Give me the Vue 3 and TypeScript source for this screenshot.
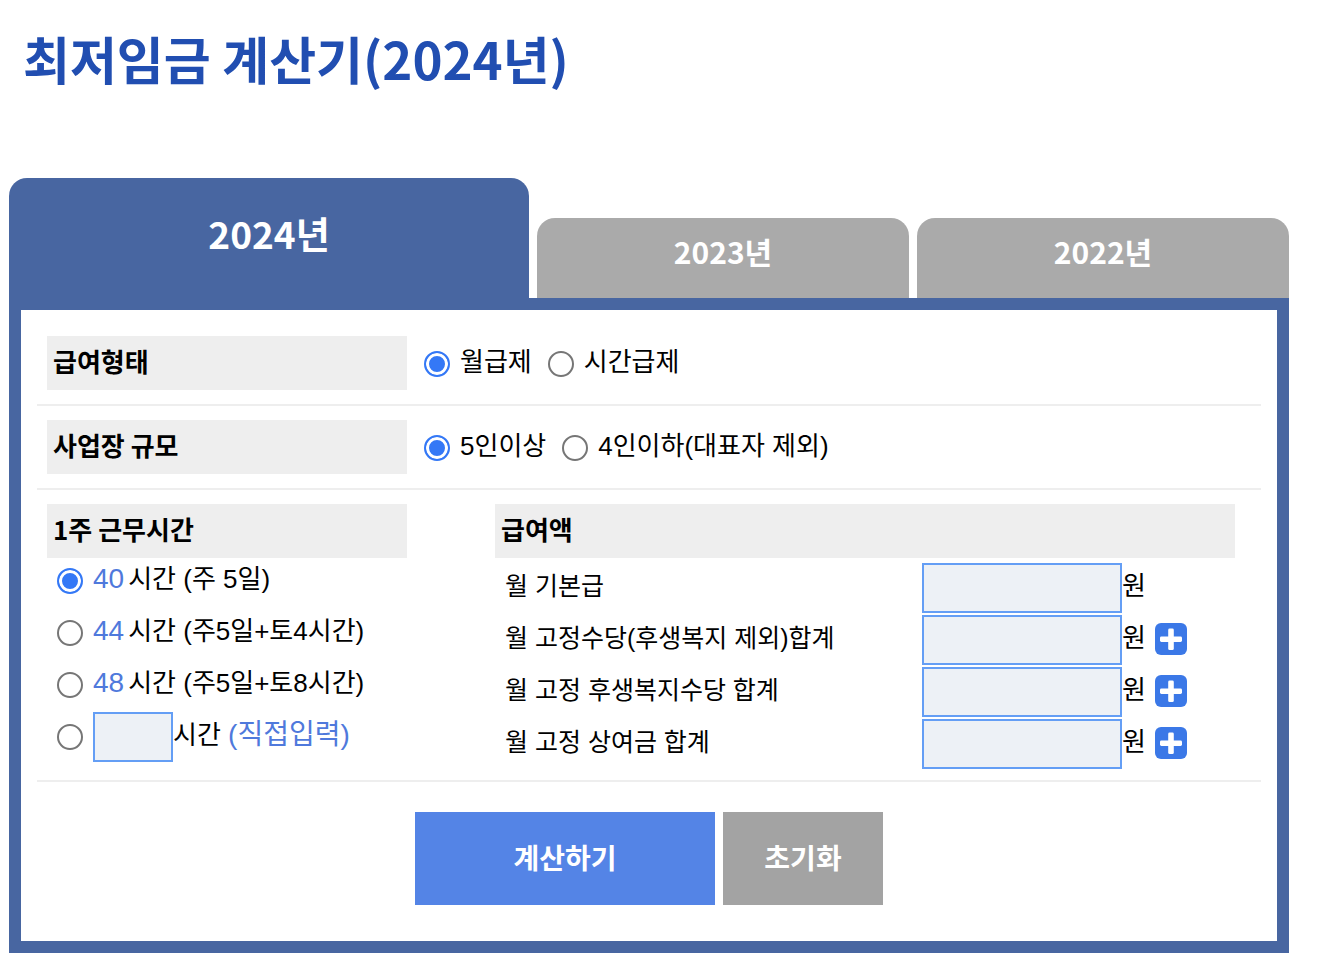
<script setup lang="ts">
import { ref } from 'vue'

interface Choice {
  value: string
  text: string
}
interface PayField {
  id: string
  label: string
  addable: boolean
}

const years: number[] = [2024, 2023, 2022]
const payTypes: Choice[] = [
  { value: 'month', text: '월급제' },
  { value: 'hour', text: '시간급제' },
]
const sizes: Choice[] = [
  { value: 'five', text: '5인이상' },
  { value: 'four', text: '4인이하(대표자 제외)' },
]
const hours: Choice[] = [
  { value: '40', text: '시간 (주 5일)' },
  { value: '44', text: '시간 (주5일+토4시간)' },
  { value: '48', text: '시간 (주5일+토8시간)' },
]
const fields: PayField[] = [
  { id: 'base', label: '월 기본급', addable: false },
  { id: 'allowance', label: '월 고정수당(후생복지 제외)합계', addable: true },
  { id: 'welfare', label: '월 고정 후생복지수당 합계', addable: true },
  { id: 'bonus', label: '월 고정 상여금 합계', addable: true },
]

const year = ref(2024)
const payType = ref('month')
const size = ref('five')
const hour = ref('40')
const customHours = ref('')
const amounts = ref<Record<string, string>>({ base: '', allowance: '', welfare: '', bonus: '' })

function reset(): void {
  payType.value = 'month'
  size.value = 'five'
  hour.value = '40'
  customHours.value = ''
  amounts.value = { base: '', allowance: '', welfare: '', bonus: '' }
}
</script>

<template>
  <main class="page">
    <h1 class="title">최저임금 계산기(2024년)</h1>
    <nav class="tabs">
      <button
        v-for="y in years"
        :key="y"
        type="button"
        class="tab"
        :class="{ active: y === year }"
        @click="year = y"
      >{{ y }}년</button>
    </nav>

    <form class="panel" @submit.prevent>
      <div class="row" role="radiogroup" aria-labelledby="pay-type">
        <div id="pay-type" class="heading side">급여형태</div>
        <div class="choices">
          <label v-for="c in payTypes" :key="c.value" class="choice">
            <input v-model="payType" class="radio" type="radio" name="pay-type" :value="c.value" />
            <span class="choice-text">{{ c.text }}</span>
          </label>
        </div>
      </div>

      <div class="row" role="radiogroup" aria-labelledby="work-size">
        <div id="work-size" class="heading side">사업장 규모</div>
        <div class="choices">
          <label v-for="c in sizes" :key="c.value" class="choice">
            <input v-model="size" class="radio" type="radio" name="work-size" :value="c.value" />
            <span class="choice-text">{{ c.text }}</span>
          </label>
        </div>
      </div>

      <div class="row split">
        <section class="side" role="radiogroup" aria-labelledby="work-hours">
          <div id="work-hours" class="heading">1주 근무시간</div>
          <div class="hours">
            <label v-for="h in hours" :key="h.value" class="hour">
              <input v-model="hour" class="radio" type="radio" name="hours" :value="h.value" />
              <span class="choice-text"><span class="accent number">{{ h.value }}</span>{{ h.text }}</span>
            </label>
            <div class="hour">
              <input id="hours-custom" v-model="hour" class="radio" type="radio" name="hours" value="custom" aria-label="직접입력" />
              <input v-model="customHours" class="box small" type="text" aria-label="1주 근무시간 직접입력" />
              <label class="choice-text" for="hours-custom">시간 <span class="accent">(직접입력)</span></label>
            </div>
          </div>
        </section>

        <section class="pay">
          <div class="heading">급여액</div>
          <div class="fields">
            <div v-for="f in fields" :key="f.id" class="field">
              <label class="field-label" :for="f.id">{{ f.label }}</label>
              <input :id="f.id" v-model="amounts[f.id]" class="box" type="text" />
              <span class="unit">원</span>
              <button v-if="f.addable" class="add" type="button" :aria-label="f.label + ' 추가'">
                <svg viewBox="0 0 32 32" width="32" height="32" aria-hidden="true">
                  <rect width="32" height="32" rx="6" fill="#3b78e7" />
                  <rect x="5" y="13.5" width="22" height="5.4" rx="1.4" fill="#fff" />
                  <rect x="13.2" y="5.5" width="5.6" height="21.6" rx="1.4" fill="#fff" />
                </svg>
              </button>
            </div>
          </div>
        </section>
      </div>

      <div class="actions">
        <button class="action calc" type="submit">계산하기</button>
        <button class="action clear" type="button" @click="reset">초기화</button>
      </div>
    </form>
  </main>
</template>

<style>
body {
  margin: 0;
  background: #fff;
}
</style>

<style scoped>
* {
  box-sizing: border-box;
}
.page {
  padding: 22px 51px 14px 9px;
  color: #000;
  font-family: "Liberation Sans", "Noto Sans CJK KR", sans-serif;
  font-size: 26px;
}
.title {
  margin: 0 0 84px;
  padding-left: 14px;
  color: #214eb1;
  font-family: "Noto Sans CJK KR", sans-serif;
  font-size: 51px;
  font-weight: 700;
  line-height: 72px;
}
.tabs {
  display: flex;
  align-items: flex-end;
  gap: 8px;
}
.tab {
  flex: 1;
  height: 80px;
  margin: 0;
  padding: 0 0 14px;
  border: 0;
  border-radius: 18px 18px 0 0;
  background: #aaa;
  color: #fff;
  font-family: "Noto Sans CJK KR", sans-serif;
  font-size: 30px;
  font-weight: 700;
  line-height: 40px;
}
.tab.active {
  flex: 0 0 520px;
  height: 120px;
  padding-bottom: 10px;
  background: #4866a1;
  font-size: 37px;
}
.panel {
  padding: 12px 16px 36px;
  border: 12px solid #4866a1;
}
.row {
  display: flex;
  padding: 14px 26px 14px 10px;
  border-bottom: 2px solid #eee;
}
.side {
  flex: 0 0 360px;
}
.heading {
  height: 54px;
  padding: 0 6px;
  background: #eee;
  font-family: "Noto Sans CJK KR", sans-serif;
  font-weight: 700;
  line-height: 50px;
}
.choices {
  display: flex;
  align-items: center;
  gap: 16px;
  padding: 2px 0 0 17px;
}
.choice,
.hour {
  display: flex;
  align-items: center;
}
.choice-text,
.unit,
.field-label {
  padding-bottom: 4px;
  line-height: 40px;
  white-space: nowrap;
}
.radio {
  appearance: none;
  flex: none;
  width: 26px;
  height: 26px;
  margin: 0 10px 0 0;
  border: 2px solid #767676;
  border-radius: 50%;
  background: #fff;
}
.radio:checked {
  border-color: #3478f6;
  background: #3478f6;
  box-shadow: inset 0 0 0 3px #fff;
}
.split {
  gap: 88px;
  padding-bottom: 11px;
}
.hours {
  display: grid;
  gap: 6px;
  padding-left: 10px;
}
.hour {
  height: 46px;
}
.accent {
  color: #4f79dc;
  font-size: 28px;
}
.number {
  margin-right: 4px;
}
.box {
  flex: none;
  width: 200px;
  height: 50px;
  margin: 0;
  padding: 0 8px;
  border: 2px solid #649ef5;
  border-radius: 0;
  background: #edf1f6;
  font: inherit;
}
.small {
  width: 80px;
}
.pay {
  flex: 1;
}
.fields {
  display: grid;
  gap: 2px;
  padding: 5px 0 0 10px;
}
.field {
  display: flex;
  align-items: center;
}
.field-label {
  flex: 0 0 417px;
  font-size: 25px;
}
.add {
  display: block;
  width: 32px;
  height: 34px;
  margin-left: 9px;
  padding: 0 0 2px;
  border: 0;
  background: none;
}
.add svg {
  display: block;
}
.actions {
  display: flex;
  justify-content: center;
  gap: 8px;
  padding-top: 30px;
}
.action {
  height: 93px;
  padding: 0 0 4px;
  border: 0;
  color: #fff;
  font-family: "Noto Sans CJK KR", sans-serif;
  font-size: 28px;
  font-weight: 700;
}
.calc {
  width: 300px;
  background: #5484e6;
}
.clear {
  width: 160px;
  background: #a3a3a3;
}
</style>
